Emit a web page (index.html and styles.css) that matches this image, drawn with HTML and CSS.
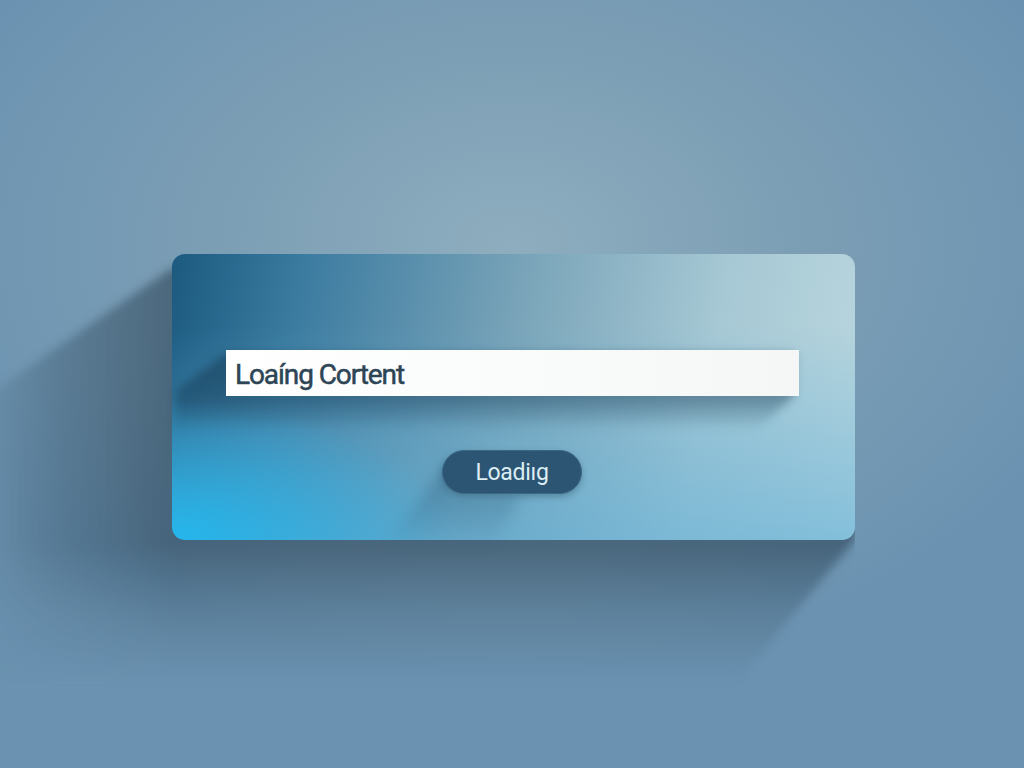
FILE: index.html
```html
<!DOCTYPE html>
<html lang="en">
<head>
<meta charset="UTF-8">
<meta name="viewport" content="width=device-width, initial-scale=1.0">
<title>Loading</title>
<link rel="stylesheet" href="styles.css">
</head>
<body>

<div class="stage">
  <div class="scene">
    <!-- long shadows are clipped shapes inside a blurred layer -->
    <div class="cast panel-cast"><div class="cast-shape"></div></div>

    <div class="panel">
      <div class="bar">
        <div class="cast bar-cast"><div class="cast-shape"></div></div>
        <span class="bar-text">Loaíng Cortent</span>
      </div>
      <div class="pill-wrap">
        <div class="cast pill-cast"><div class="cast-shape"></div></div>
        <button class="pill">Loadiıg</button>
      </div>
    </div>
  </div>
</div>

</body>
</html>
```

FILE: styles.css
```css
html, body { margin: 0; height: 100%; }
body {
  font-family: "Liberation Sans", Arial, sans-serif;
  background: radial-gradient(ellipse 60% 55% at 50% 32%, #8eaebf 0%, #7d9fb5 45%, #6b93b1 100%);
  overflow: hidden;
}
.stage { height: 768px; padding-top: 254px; box-sizing: border-box; }

.cast { position: absolute; pointer-events: none; }
.cast-shape { width: 100%; height: 100%; }

.scene { position: relative; width: 683px; margin-left: 172px; }
.panel-cast {
  left: -240px; top: 0; width: 923px; height: 440px;
  filter: blur(5px);
  -webkit-mask-image: linear-gradient(90deg, transparent 30px, rgba(0,0,0,0.55) 130px, #000 240px);
  mask-image: linear-gradient(90deg, transparent 30px, rgba(0,0,0,0.55) 130px, #000 240px);
}
.panel-cast .cast-shape {
  background: linear-gradient(180deg, rgba(30, 52, 70, 0.5) 0%, rgba(30, 52, 70, 0.5) 290px, rgba(30, 52, 70, 0.2) 360px, rgba(30, 52, 70, 0) 430px);
  clip-path: polygon(240px 14px, 0 180px, 0 440px, 795px 440px, 923px 286px, 923px 14px);
}

.panel {
  position: relative; isolation: isolate;
  height: 286px;
  border-radius: 13px;
  background:
    radial-gradient(ellipse 55% 65% at 0% 100%, rgba(34, 185, 240, 0.95) 0%, rgba(34, 175, 235, 0) 75%),
    linear-gradient(180deg, rgba(80, 165, 212, 0) 25%, rgba(95, 175, 215, 0.6) 100%),
    linear-gradient(100deg, #1c5a80 0%, #3b7ba0 18%, #78a3b8 48%, #a6c8d4 76%, #bad7df 100%);
  display: flex; flex-direction: column; align-items: flex-start;
  padding: 96px 0 0 54px; box-sizing: border-box;
}

.bar {
  position: relative;
  width: 573px; height: 46px;
  background: linear-gradient(90deg, #ffffff 0%, #f5f7f7 100%);
  display: flex; align-items: center;
  padding-left: 9px; box-sizing: border-box;
}
.bar-cast {
  z-index: -1;
  left: -50px; top: 0; width: 623px; height: 80px;
  filter: blur(5px);
}
.bar-cast .cast-shape {
  background: linear-gradient(180deg, rgba(20, 55, 80, 0.6) 0%, rgba(20, 55, 80, 0.42) 60%, rgba(20, 55, 80, 0) 100%);
  clip-path: polygon(50px 4px, 0 40px, 0 80px, 580px 80px, 618px 46px, 618px 4px);
}
.bar-text {
  font-family: Roboto, "Liberation Sans", sans-serif;
  font-size: 28px; color: #2d4555;
  letter-spacing: -1.1px; font-weight: 400;
  -webkit-text-stroke: 0.5px #2d4555;
  margin-top: 2px;
}

.pill-wrap { position: relative; margin: 54px 0 0 216px; }
.pill-cast {
  z-index: -1;
  left: -70px; top: 8px; width: 210px; height: 90px;
  filter: blur(7px);
}
.pill-cast .cast-shape {
  background: linear-gradient(180deg, rgba(25, 70, 100, 0.4) 0%, rgba(25, 70, 100, 0) 100%);
  clip-path: polygon(80px 0, 10px 90px, 120px 90px, 150px 36px, 80px 36px);
}
.pill {
  position: relative;
  width: 140px; height: 44px;
  border: 1px solid #3c6784; border-radius: 22px;
  background: #2b5573;
  color: #dcedf4;
  font-family: Roboto, "Liberation Sans", sans-serif;
  font-size: 23px; letter-spacing: -0.3px;
  box-shadow: 0 3px 6px rgba(20, 50, 70, 0.3);
}
```
